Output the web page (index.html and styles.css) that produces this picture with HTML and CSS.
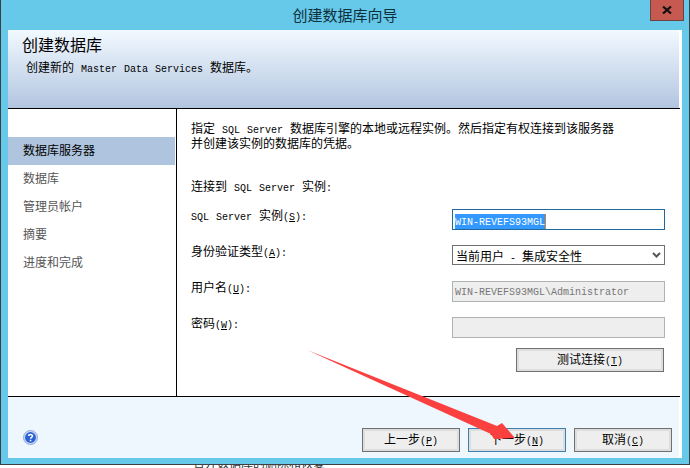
FILE: index.html
```html
<!DOCTYPE html>
<html lang="zh-CN">
<head>
<meta charset="utf-8">
<title>创建数据库向导</title>
<link rel="stylesheet" href="styles.css">
</head>
<body>
<div class="window">
  <div class="titlebar">
    <span class="title">创建数据库向导</span>
    <div class="close"><svg width="10" height="8" viewBox="0 0 10 8"><path d="M1 0.5 L9 7.5 M9 0.5 L1 7.5" stroke="#111" stroke-width="2.2" fill="none"/></svg></div>
  </div>
  <div class="client">
    <header class="banner">
      <h1 class="banner-title">创建数据库</h1>
      <p class="banner-sub">创建新的<span class="l"> Master Data Services </span>数据库。</p>
    </header>
    <div class="middle">
      <nav class="side">
        <div class="step current">数据库服务器</div>
        <div class="step">数据库</div>
        <div class="step">管理员帐户</div>
        <div class="step">摘要</div>
        <div class="step">进度和完成</div>
      </nav>
      <main class="panel">
        <p class="intro">指定<span class="l"> SQL Server </span>数据库引擎的本地或远程实例。然后指定有权连接到该服务器<br>并创建该实例的数据库的凭据。</p>
        <p class="section">连接到<span class="l"> SQL Server </span>实例<span class="l">:</span></p>
        <div class="form">
          <label class="lab"><span class="l">SQL Server </span>实例<span class="l">(<u>S</u>):</span></label>
          <div class="field active"><span class="sel l">WIN-REVEFS93MGL</span></div>
          <label class="lab">身份验证类型<span class="l">(<u>A</u>):</span></label>
          <div class="field combo"><span class="combo-text">当前用户<span class="l"> - </span>集成安全性</span><svg width="9" height="6" viewBox="0 0 9 6"><path d="M1 1 L4.5 4.5 L8 1" stroke="#555" stroke-width="2" fill="none"/></svg></div>
          <label class="lab">用户名<span class="l">(<u>U</u>):</span></label>
          <div class="field off"><span class="l">WIN-REVEFS93MGL\Administrator</span></div>
          <label class="lab">密码<span class="l">(<u>W</u>):</span></label>
          <div class="field off"></div>
        </div>
        <div class="test-row"><button class="btn test">测试连接<span class="l">(<u>T</u>)</span></button></div>
      </main>
    </div>
    <footer class="foot">
      <svg class="help" width="15" height="15" viewBox="0 0 15 15">
        <circle cx="7.5" cy="7.5" r="7" fill="#c9d8f2" stroke="#8ea9dc"/>
        <circle cx="7.5" cy="7.5" r="5.4" fill="#2a5fd6"/>
        <path d="M5.6 6 C5.6 3.9 9.5 3.9 9.5 6 C9.5 7.4 7.5 7.2 7.5 8.8" stroke="#fff" stroke-width="1.5" fill="none"/>
        <rect x="6.8" y="9.8" width="1.5" height="1.5" fill="#fff"/>
      </svg>
      <div class="actions">
        <button class="btn">上一步<span class="l">(<u>P</u>)</span></button>
        <button class="btn primary">下一步<span class="l">(<u>N</u>)</span></button>
        <button class="btn">取消<span class="l">(<u>C</u>)</span></button>
      </div>
    </footer>
  </div>
</div>
<div class="behind"><span class="behind-text">合并数据库的删除和恢复</span></div>
<svg class="arrow" width="690" height="468" viewBox="0 0 690 468"><path d="M307 350 L497 426 L502 423 L515 438 L494 439 L491 434 Z" fill="#fb4040"/></svg>
</body>
</html>
```
FILE: styles.css
```css
html, body { margin: 0; padding: 0; }
body {
  width: 690px;
  height: 468px;
  overflow: hidden;
  background: #fff;
  font-family: "Noto Sans CJK SC", "Liberation Mono", sans-serif;
  font-size: 12px;
  line-height: 14px;
  color: #000;
  position: relative;
}
.l { font-family: "Liberation Mono", monospace; font-size: 10px; line-height: 1; white-space: pre; word-spacing: 1px; }
.window {
  width: 690px;
  height: 465px;
  box-sizing: border-box;
  background: #66c9ea;
  border: 1px solid #3a4044;
  border-top: 0;
  display: flex;
  flex-direction: column;
  padding: 0 7px 6px 7px;
}
.titlebar {
  height: 30px;
  flex: none;
  display: flex;
  justify-content: center;
  align-items: center;
  position: relative;
}
.title { font-size: 15px; line-height: 28px; color: #10303c; padding-bottom: 1px; }
.close {
  position: absolute;
  right: -2px;
  top: 0;
  width: 32px;
  height: 20px;
  background: #c65a50;
  border: 1px solid #6a4540;
  border-top: 0;
  display: flex;
  align-items: center;
  justify-content: center;
}
.client {
  flex: 1;
  display: flex;
  flex-direction: column;
  background: #fff;
  min-height: 0;
}
.banner {
  height: 78px;
  flex: none;
  box-sizing: border-box;
  margin-right: 3px;
  padding: 4px 0 0 14px;
  background: linear-gradient(#f2f9ff, #b2c5e0);
}
.banner-title { margin: 0; font-size: 16px; font-weight: 400; line-height: 20px; }
.banner-sub { margin: 6px 0 0 4px; line-height: 14px; }
.middle {
  flex: 1;
  display: flex;
  min-height: 0;
  border-top: 1px solid #000;
  border-bottom: 1px solid #000;
  margin-right: 2px;
}
.side {
  width: 168px;
  flex: none;
  border-right: 1px solid #000;
  padding-top: 28px;
  box-sizing: content-box;
}
.step {
  height: 28px;
  line-height: 25px;
  padding-left: 15px;
  color: #555;
}
.step.current { background: #afc4de; color: #000; margin-right: 1px; }
.panel { flex: 1; padding: 12px 0 0 14px; min-width: 0; }
.intro { margin: 0; line-height: 14px; }
.section { margin: 29px 0 0; line-height: 14px; height: 14px; }
.form {
  display: grid;
  grid-template-columns: 261px 213px;
  grid-auto-rows: 21px;
  row-gap: 15px;
  margin-top: 16px;
}
.lab { line-height: 12px; }
.field {
  box-sizing: border-box;
  border: 1px solid #aeb3b3;
  background: #eee;
  height: 21px;
  padding-left: 2px;
  color: #777;
  line-height: 15px;
  white-space: nowrap;
  overflow: hidden;
}
.field.active { border-color: #23689b; background: #fff; padding-top: 1px; line-height: 17px; }
.sel {
  display: inline-block;
  background: #3399ff;
  color: #fff;
  height: 17px;
  line-height: 17px;
  width: 91px;
  border-right: 1px solid #d9822b;
  box-sizing: border-box;
}
.field.combo {
  height: 20px;
  border-color: #707070;
  background: #fff;
  color: #000;
  display: flex;
  justify-content: space-between;
  align-items: center;
  padding: 0 3px 0 3px;
  line-height: 18px;
}
.combo-text { position: relative; top: 1px; }
.combo-text .l { word-spacing: 0; }
.test-row { display: flex; justify-content: flex-end; margin-top: 10px; padding-right: 16px; }
.btn {
  box-sizing: border-box;
  width: 98px;
  height: 24px;
  padding: 0 0 2px;
  border: 1px solid #707070;
  background: #eee;
  box-shadow: inset 0 0 0 2px #ddd;
  font: inherit;
  color: #000;
  line-height: 20px;
}
.btn.primary { border-color: #3c7fb1; }
.btn.test { width: 148px; padding-bottom: 4px; }
.foot {
  height: 61px;
  flex: none;
  margin-right: 3px;
  background: #eef6fe;
  display: flex;
  justify-content: space-between;
  align-items: flex-start;
  padding: 31px 7px 0 15px;
  box-sizing: border-box;
}
.help { margin-top: 2px; }
.actions { display: flex; gap: 8px; }
.behind { height: 3px; overflow: hidden; position: relative; }
.behind-text { display: block; padding-left: 193px; line-height: 12px; margin-top: -8px; color: #333; }
.arrow { position: absolute; left: 0; top: 0; pointer-events: none; }
```
